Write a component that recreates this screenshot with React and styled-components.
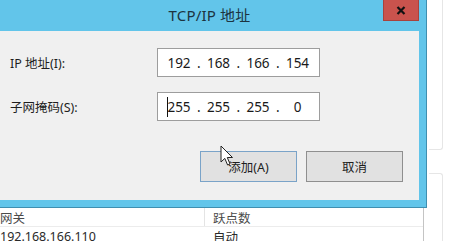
import React from 'react';
import styled, { createGlobalStyle } from 'styled-components';

const GlobalStyle = createGlobalStyle`
  html, body {
    margin: 0;
    padding: 0;
    background: #ffffff;
  }
  body {
    width: 457px;
    height: 241px;
    overflow: hidden;
    font-family: "Noto Sans", "Noto Sans CJK SC", sans-serif;
  }
`;

const Screen = styled.div`
  position: relative;
  width: 457px;
  height: 241px;
  display: flex;
  overflow: hidden;
  background: #ffffff;
`;

const MainColumn = styled.div`
  width: 427px;
  display: flex;
  flex-direction: column;
`;

const Window = styled.div`
  width: 427px;
  box-sizing: border-box;
  background: #62c5ea;
  padding: 0 7px 7px 0;
  border-right: 1px solid #3f8fb0;
  border-bottom: 1px solid #3f8fb0;
  display: flex;
  flex-direction: column;
`;

const TitleBar = styled.div`
  height: 31px;
  width: 419px;
  display: grid;
  grid-template-columns: 1fr auto 1fr;
`;

const Title = styled.div`
  grid-column: 2;
  align-self: center;
  padding-bottom: 3px;
  font-size: 15px;
  color: #1c3340;
  letter-spacing: 0.2px;
`;

const CloseButton = styled.div`
  grid-column: 3;
  justify-self: end;
  width: 36px;
  height: 21px;
  background: #c9534d;
  border: 1px solid #a8423d;
  border-top: none;
  box-sizing: border-box;
  display: flex;
  align-items: center;
  justify-content: center;
`;

const Client = styled.div`
  width: 419px;
  height: 169px;
  box-sizing: border-box;
  background: #f0f0f0;
  padding: 17px 16px 0 10px;
  display: flex;
  flex-direction: column;
`;

const FieldRow = styled.div`
  display: grid;
  grid-template-columns: 147px 163px;
  align-items: center;
  margin-bottom: ${(p) => p.$gap}px;
`;

const Label = styled.div`
  font-size: 12.5px;
  color: #1e1e1e;
`;

const IpBox = styled.div`
  position: relative;
  height: 29px;
  box-sizing: border-box;
  background: #ffffff;
  border: 1px solid #9d9d9d;
  padding-left: 6px;
  display: flex;
  align-items: center;
  font-size: 13.5px;
  color: #1a1a1a;
`;

const Octet = styled.span`
  width: 30px;
  text-align: center;
`;

const Dot = styled.span`
  width: 9.5px;
  text-align: center;
`;

const Caret = styled.span`
  position: absolute;
  left: 9px;
  top: 4px;
  width: 1px;
  height: 20px;
  background: #111;
`;

const ButtonRow = styled.div`
  display: flex;
  justify-content: flex-end;
  gap: 9px;
`;

const Button = styled.div`
  width: 97px;
  height: 31px;
  box-sizing: border-box;
  background: #e1e1e1;
  border: 1px solid ${(p) => (p.$focused ? '#7aa3c8' : '#8f8f8f')};
  display: flex;
  align-items: center;
  justify-content: center;
  font-size: 12.5px;
  color: #1e1e1e;
`;

const List = styled.div`
  width: 423px;
  flex: 1;
  border-right: 1px solid #c4c4c4;
  background: #ffffff;
  display: flex;
  flex-direction: column;
`;

const ListRow = styled.div`
  display: grid;
  grid-template-columns: 205px 1fr;
  height: ${(p) => p.$height}px;
  border-bottom: ${(p) => (p.$header ? '1px solid #ececec' : 'none')};
`;

const Cell = styled.div`
  font-size: 12.5px;
  color: ${(p) => (p.$header ? '#4a4a4a' : '#2a2a2a')};
  padding-left: ${(p) => p.$pad}px;
  border-right: ${(p) => (p.$divider ? '1px solid #e4e4e4' : 'none')};
  background: ${(p) => p.$bg || 'transparent'};
  display: flex;
  align-items: center;
  white-space: nowrap;
  overflow: hidden;
`;

const SideStrip = styled.div`
  flex: 1;
  display: flex;
  flex-direction: column;
  padding-left: 2px;
`;

const SidePanel = styled.div`
  width: 13px;
  height: ${(p) => p.$height}px;
  margin-top: ${(p) => p.$top}px;
  border-right: 1px solid #e6e6e6;
  border-${(p) => p.$edge}: 1px solid #e6e6e6;
  border-${(p) => p.$edge}-right-radius: 3px;
`;

const Pointer = styled.svg`
  position: absolute;
  left: 220px;
  top: 145px;
`;

function IpAddress({ octets, caret }) {
  return (
    <IpBox>
      {caret && <Caret />}
      {octets.map((o, i) => (
        <React.Fragment key={i}>
          <Octet>{o}</Octet>
          {i < octets.length - 1 && <Dot>.</Dot>}
        </React.Fragment>
      ))}
    </IpBox>
  );
}

export default function App() {
  return (
    <>
      <GlobalStyle />
      <Screen>
        <MainColumn>
          <Window>
            <TitleBar>
              <Title>TCP/IP 地址</Title>
              <CloseButton>
                <svg width="10" height="9" viewBox="0 0 10 9">
                  <path d="M1.5 1 L8.5 8 M8.5 1 L1.5 8" stroke="#111" strokeWidth="2.2" />
                </svg>
              </CloseButton>
            </TitleBar>
            <Client>
              <FieldRow $gap={15}>
                <Label>IP 地址(I):</Label>
                <IpAddress octets={['192', '168', '166', '154']} />
              </FieldRow>
              <FieldRow $gap={30}>
                <Label>子网掩码(S):</Label>
                <IpAddress octets={['255', '255', '255', '0']} caret />
              </FieldRow>
              <ButtonRow>
                <Button $focused>添加(A)</Button>
                <Button>取消</Button>
              </ButtonRow>
            </Client>
          </Window>
          <List>
            <ListRow $height={18} $header>
              <Cell $header $pad={0} $divider>网关</Cell>
              <Cell $header $pad={8}>跃点数</Cell>
            </ListRow>
            <ListRow $height={18}>
              <Cell $pad={0}>192.168.166.110</Cell>
              <Cell $pad={8}>自动</Cell>
            </ListRow>
          </List>
        </MainColumn>
        <SideStrip>
          <SidePanel $height={155} $top={0} $edge="bottom" />
          <SidePanel $height={70} $top={23} $edge="top" />
        </SideStrip>
        <Pointer width="14" height="22" viewBox="0 0 14 22">
          <path
            d="M1 1 L1 17 L4.8 13.4 L7.6 20 L10 19 L7.3 12.5 L12.5 12.5 Z"
            fill="#ffffff"
            stroke="#222"
            strokeWidth="1"
            strokeLinejoin="round"
          />
        </Pointer>
      </Screen>
    </>
  );
}
